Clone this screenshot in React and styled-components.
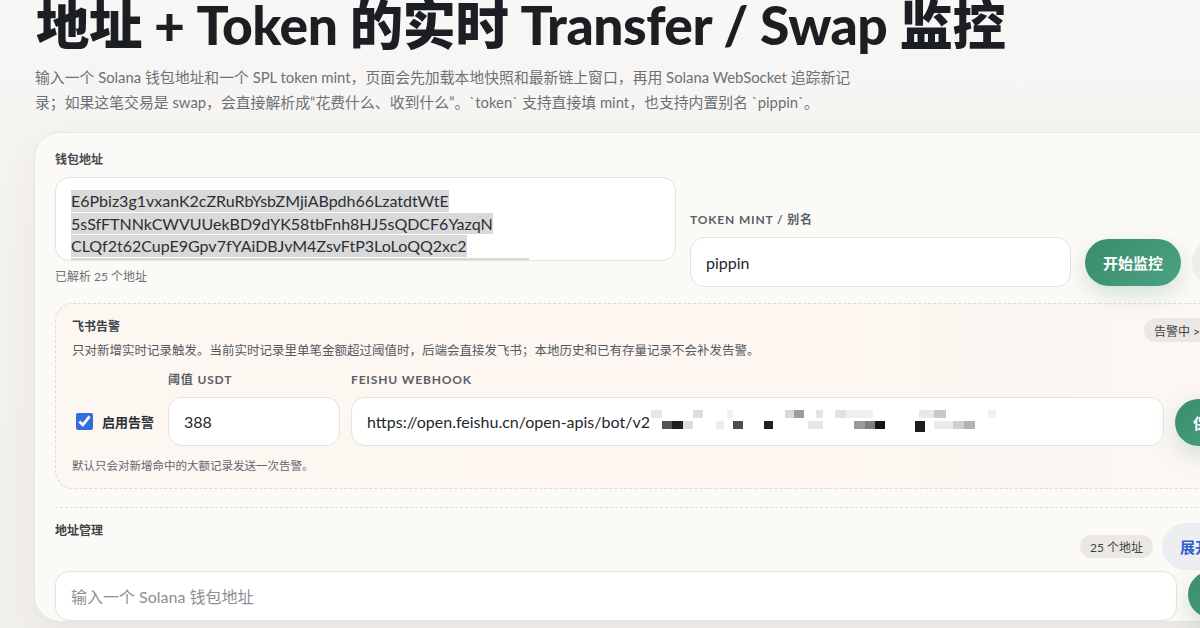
import React from 'react'
import styled, { createGlobalStyle } from 'styled-components'

const GlobalStyle = createGlobalStyle`
  html, body {
    margin: 0;
    padding: 0;
    overflow: hidden;
    background: #f4f2ef;
  }
  body {
    font-family: Lato, "Noto Sans CJK SC", sans-serif;
    -webkit-font-smoothing: antialiased;
  }
  * { box-sizing: border-box; }
`;

const Page = styled.div`
  width: 1200px;
  height: 628px;
  overflow: hidden;
  padding-left: 34px;
  background: linear-gradient(180deg, #f8f7f5 0%, #f4f2ef 40%, #f2f0ec 100%);
`;

const Title = styled.h1`
  margin: -6px 0 0 2px;
  font-size: 53.4px;
  line-height: 60px;
  font-weight: 900;
  color: #1b1f23;
  white-space: nowrap;
  letter-spacing: -0.5px;
`;

const Lead = styled.p`
  margin: 11px 0 0 1px;
  width: 836px;
  font-size: 14.85px;
  line-height: 25px;
  color: #6c7176;
`;

const Card = styled.section`
  width: 1245px;
  flex-shrink: 0;
  margin-top: 17px;
  padding: 19px 20px 0 20px;
  border: 1px solid #ebe7df;
  border-radius: 26px;
  background: #fcfaf6;
  box-shadow: 0 12px 40px rgba(70, 55, 30, 0.06);
`;

const TopGrid = styled.div`
  display: grid;
  grid-template-columns: 621px 381px auto;
  column-gap: 14px;
  align-items: end;
`;

const Label = styled.div`
  font-size: 12px;
  line-height: 16px;
  font-weight: 700;
  color: ${p => (p.$caps ? '#5b6066' : '#464b51')};
  letter-spacing: ${p => (p.$caps ? '0.07em' : '0')};
  margin-bottom: 9px;
  white-space: nowrap;
`;

const AddressBox = styled.div`
  height: 84px;
  overflow: hidden;
  padding: 12px 15px 0;
  border: 1px solid #e6e2db;
  border-radius: 14px;
  background: #fff;
  font-size: 16px;
  line-height: 22.6px;
  color: #2b2f33;
`;

const AddressLine = styled.div`
  white-space: nowrap;
`;

const Selected = styled.span`
  display: inline-block;
  line-height: 21.5px;
  background: #d9d9d9;
`;

const Hint = styled.div`
  margin-top: 8px;
  padding-bottom: 2px;
  font-size: 12px;
  line-height: 16px;
  color: #6b7075;
`;

const Field = styled.div`
  height: ${p => p.$h || 50}px;
  display: flex;
  align-items: center;
  padding: 0 15px;
  border: 1px solid #e6e2db;
  border-radius: 14px;
  background: #fff;
  font-size: 16px;
  color: ${p => (p.$placeholder ? '#8b8f94' : '#24282c')};
  white-space: nowrap;
  overflow: hidden;
  min-width: 0;
`;

const ButtonRow = styled.div`
  display: flex;
  gap: 11px;
  margin-bottom: 1px;
`;

const Button = styled.button`
  height: 47px;
  padding: 0 ${p => p.$pad || 18}px;
  border: none;
  border-radius: 999px;
  font-family: inherit;
  font-size: 15px;
  font-weight: 700;
  white-space: nowrap;
  color: ${p => (p.$kind === 'ghost' ? '#b3b3b3' : p.$kind === 'soft' ? '#2f5fcf' : '#fff')};
  background: ${p =>
    p.$kind === 'ghost'
      ? '#eeedea'
      : p.$kind === 'soft'
      ? '#eceef2'
      : 'linear-gradient(135deg, #3b8c6b 0%, #4aa283 100%)'};
  box-shadow: ${p => (p.$kind ? 'none' : '0 8px 22px rgba(60, 140, 108, 0.22)')};
`;

const AlertBox = styled.div`
  margin-top: 16px;
  padding: 15px 16px 14px 16px;
  border: 1px dashed #e0dad1;
  border-radius: 18px;
  background: linear-gradient(90deg, #fdf7f2 0%, #fdf6f1 60%, #fcf7f3 100%);
`;

const AlertHead = styled.div`
  display: flex;
  justify-content: space-between;
  align-items: flex-start;
`;

const SectionTitle = styled.div`
  font-size: 12px;
  line-height: 16px;
  font-weight: 700;
  color: #3e4348;
`;

const Desc = styled.div`
  margin-top: 8px;
  font-size: 12.5px;
  line-height: 16px;
  color: #555a5f;
`;

const Pill = styled.span`
  display: inline-flex;
  align-items: center;
  height: ${p => p.$h || 22}px;
  padding: 0 10px;
  border-radius: 999px;
  background: #ebe8e4;
  font-size: 12px;
  color: #3d4247;
  white-space: nowrap;
  margin-top: ${p => p.$mt || 0}px;
`;

const FieldsGrid = styled.div`
  display: grid;
  grid-template-columns: 85px 172px 1fr auto;
  column-gap: 11px;
  align-items: end;
  margin-top: 13px;
`;

const Check = styled.label`
  height: 49px;
  display: flex;
  align-items: center;
  gap: 9px;
  padding-left: 4px;
  font-size: 13px;
  font-weight: 700;
  color: #2c3035;
  white-space: nowrap;

  input {
    margin: 0;
    width: 17px;
    height: 17px;
    accent-color: #2f6de1;
  }
`;

const Note = styled.div`
  margin-top: 12px;
  font-size: 11.5px;
  line-height: 16px;
  color: #62676c;
`;

const AddressSection = styled.div`
  margin-top: 18px;
  padding-top: 15px;
  border-top: 1px dashed #e3ded6;
`;

const ManageHead = styled.div`
  display: flex;
  justify-content: space-between;
  align-items: flex-start;
`;

const ManageActions = styled.div`
  display: flex;
  align-items: center;
  gap: 9px;
`;

const AddRow = styled.div`
  display: flex;
  gap: 11px;
  margin-top: 1px;

  & > :first-child {
    flex: 1;
  }
`;

const Redacted = styled.svg`
  flex-shrink: 0;
  margin-left: -3px;
`;

// pixelated blur over the webhook secret: [x, row, width, colour, tall]
const blocks = [
  [4, 0, 11, '#e6e6e6'], [46, 0, 10, '#dedede'], [80, 0, 6, '#f0f0f0'],
  [138, 0, 9, '#d8d8d8'], [147, 0, 10, '#9c9c9c'], [169, 0, 7, '#e4e4e4'],
  [188, 0, 11, '#e2e2e2'], [199, 0, 27, '#efefef'], [272, 0, 15, '#e8e8e8'],
  [287, 0, 12, '#c9c9c9'], [341, 0, 8, '#f1f1f1'],
  [15, 1, 10, '#555'], [25, 1, 11, '#1f1f1f'], [36, 1, 10, '#dcdcdc'],
  [69, 1, 8, '#ececec'], [86, 1, 10, '#4e4e4e'], [117, 1, 9, '#202020'],
  [161, 1, 15, '#e6e6e6'], [207, 1, 11, '#9a9a9a'], [218, 1, 10, '#7d7d7d'],
  [228, 1, 10, '#161616'], [268, 1, 10, '#1d1d1d', true], [287, 1, 19, '#ebebeb'],
  [306, 1, 11, '#cfcfcf'], [317, 1, 11, '#b4b4b4'],
];

const addresses = [
  'E6Pbiz3g1vxanK2cZRuRbYsbZMjiABpdh66LzatdtWtE',
  '5sSfFTNNkCWVUUekBD9dYK58tbFnh8HJ5sQDCF6YazqN',
  'CLQf2t62CupE9Gpv7fYAiDBJvM4ZsvFtP3LoLoQQ2xc2',
  'BWrXrGmJsw149sdWkR3MrzuheaP2VnDoNAJxwPdhMuokbdqa',
];

export default function App() {
  return (
    <Page>
      <GlobalStyle />
      <Title>地址 + Token 的实时 Transfer / Swap 监控</Title>
      <Lead>
        输入一个 Solana 钱包地址和一个 SPL token mint，页面会先加载本地快照和最新链上窗口，再用 Solana WebSocket 追踪新记录；如果这笔交易是 swap，会直接解析成“花费什么、收到什么”。`token` 支持直接填 mint，也支持内置别名 `pippin`。
      </Lead>

      <Card>
        <TopGrid>
          <div>
            <Label>钱包地址</Label>
            <AddressBox>
              {addresses.map(a => (
                <AddressLine key={a}>
                  <Selected>{a}</Selected>
                </AddressLine>
              ))}
            </AddressBox>
            <Hint>已解析 25 个地址</Hint>
          </div>
          <div>
            <Label $caps>TOKEN MINT / 别名</Label>
            <Field>pippin</Field>
          </div>
          <ButtonRow>
            <Button>开始监控</Button>
            <Button $kind="ghost">停止</Button>
          </ButtonRow>
        </TopGrid>

        <AlertBox>
          <AlertHead>
            <div>
              <SectionTitle>飞书告警</SectionTitle>
              <Desc>只对新增实时记录触发。当前实时记录里单笔金额超过阈值时，后端会直接发飞书；本地历史和已有存量记录不会补发告警。</Desc>
            </div>
            <Pill $h={24} $mt={-1}>告警中 &gt;= 388</Pill>
          </AlertHead>
          <FieldsGrid>
            <Check>
              <input type="checkbox" defaultChecked readOnly />
              启用告警
            </Check>
            <div>
              <Label $caps>阈值 USDT</Label>
              <Field $h={49}>388</Field>
            </div>
            <div>
              <Label $caps>FEISHU WEBHOOK</Label>
              <Field $h={49}>
                https://open.feishu.cn/open-apis/bot/v2
                <Redacted width="350" height="24" viewBox="0 0 350 24">
                  {blocks.map(([x, row, w, c, tall], i) => (
                    <rect key={i} x={x} y={row ? 11 : 0} width={w} height={tall ? 11 : 8} fill={c} />
                  ))}
                </Redacted>
              </Field>
            </div>
            <Button>保存</Button>
          </FieldsGrid>
          <Note>默认只会对新增命中的大额记录发送一次告警。</Note>
        </AlertBox>

        <AddressSection>
          <ManageHead>
            <SectionTitle>地址管理</SectionTitle>
            <ManageActions>
              <Pill $h={23}>25 个地址</Pill>
              <Button $kind="soft">展开列表</Button>
            </ManageActions>
          </ManageHead>
          <AddRow>
            <Field $h={50} $placeholder>输入一个 Solana 钱包地址</Field>
            <Button $pad={20}>添加</Button>
          </AddRow>
        </AddressSection>
      </Card>
    </Page>
  )
}
